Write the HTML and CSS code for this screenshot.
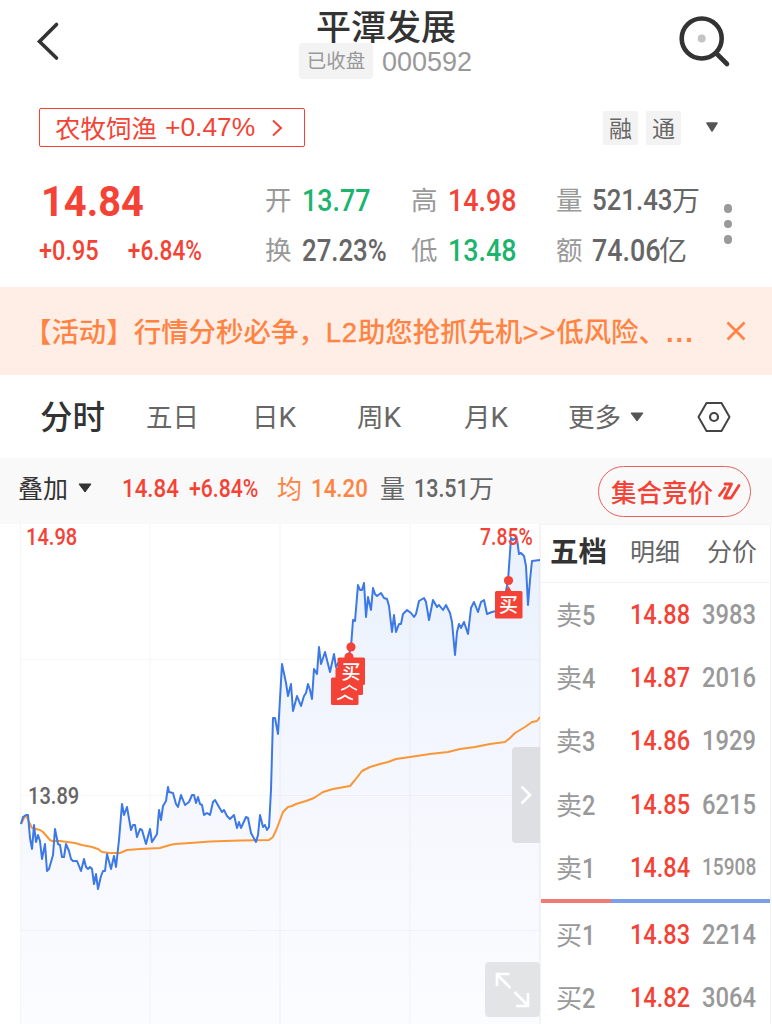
FILE: index.html
```html
<!DOCTYPE html>
<html lang="zh-CN">
<head>
<meta charset="utf-8">
<title>平潭发展 000592</title>
<link rel="stylesheet" href="styles.css">
</head>
<body>
<header class="header">
  <svg class="back" width="40" height="44" viewBox="30 20 40 44"><path d="M56.500 24.500L39.500 41.500L56.500 58" fill="none" stroke="#333" stroke-width="3.600" stroke-linecap="round"/></svg>
  <div class="heading">
    <h1>平潭发展</h1>
    <div class="sub"><span class="closed">已收盘</span><span class="code">000592</span></div>
  </div>
  <svg class="search" width="56" height="56" viewBox="676 14 56 56"><circle cx="701.700" cy="38.500" r="20" fill="none" stroke="#333" stroke-width="4.600"/><circle cx="701.700" cy="38.500" r="4" fill="#c4c4c4"/><path d="M716 53L727 64" stroke="#333" stroke-width="4.600" stroke-linecap="round"/></svg>
</header>

<section class="sector-row">
  <div class="sector"><span>农牧饲渔</span><span class="pct">+0.47%</span><svg width="12" height="20" viewBox="0 0 12 20"><path d="M2 2.500L10 10L2 17.500" fill="none" stroke="#f44336" stroke-width="2"/></svg></div>
  <span class="flag">融</span><span class="flag">通</span>
  <svg class="drop" width="14" height="11" viewBox="0 0 14 11"><path d="M2 1H12L7 9Z" fill="#555" stroke="#555" stroke-width="1.500" stroke-linejoin="round"/></svg>
</section>

<section class="quote">
  <div class="price">
    <div class="last"><b class="num">14.84</b></div>
    <div class="change"><b class="num">+0.95</b><b class="num pc">+6.84%</b></div>
  </div>
  <div class="stats">
    <span>开</span><b class="num green">13.77</b><span>高</span><b class="num red">14.98</b><span>量</span><div class="amount vol"><b class="num">521.43</b><i>万</i></div>
    <span>换</span><b class="num pc">27.23%</b><span>低</span><b class="num green">13.48</b><span>额</span><div class="amount"><b class="num">74.06</b><i>亿</i></div>
  </div>
  <div class="dots"><i></i><i></i><i></i></div>
</section>

<section class="banner">
  <p>【活动】行情分秒必争，<span class="latin">L2</span>助您抢抓先机<span class="arrows">&gt;&gt;</span>低风险、<span class="more">...</span></p>
  <svg width="20" height="20" viewBox="0 0 20 20"><path d="M1.500 1.500L18.500 18.500M18.500 1.500L1.500 18.500" stroke="#ff8444" stroke-width="2.700"/></svg>
</section>

<nav class="tabs">
  <span class="active">分时</span><span>五日</span><span>日<em>K</em></span><span>周<em>K</em></span><span>月<em>K</em></span><span>更多</span>
  <svg class="tri" width="16" height="12" viewBox="0 0 16 12"><path d="M2 2H14L8 10Z" fill="#555" stroke="#555" stroke-linejoin="round"/></svg>
  <svg class="hex" width="36" height="32" viewBox="0 0 36 32"><path d="M10.500 2H25.500L33.500 16L25.500 30H10.500L2.500 16Z" fill="none" stroke="#444" stroke-width="2" stroke-linejoin="round"/><circle cx="18" cy="16" r="4" fill="none" stroke="#444" stroke-width="2.200"/></svg>
</nav>

<section class="info">
  <span class="overlay">叠加</span>
  <svg class="tri" width="16" height="12" viewBox="0 0 16 12"><path d="M2 2H14L8 10Z" fill="#333" stroke="#333" stroke-linejoin="round"/></svg>
  <b class="num red">14.84</b><b class="num red pc">+6.84%</b>
  <span class="orange">均</span><b class="num orange">14.20</b>
  <span>量</span><b class="num now">13.51</b><span class="unit">万</span>
  <div class="auction"><span>集合竞价</span><svg width="24" height="20" viewBox="0 0 24 20"><path d="M8 7L2.500 14.500M8 3H14.500L7.500 17H14L22 4.500" fill="none" stroke="#f44336" stroke-width="2.800" stroke-linecap="round" stroke-linejoin="round"/></svg></div>
</section>

<main class="main">
  <div class="chart">
    <svg width="540" height="500" viewBox="0 524 540 500">
      <defs><linearGradient id="fill" gradientUnits="userSpaceOnUse" x1="0" y1="540" x2="0" y2="1024"><stop offset="0" stop-color="#e9f1fd"/><stop offset=".5" stop-color="#f5f7fe"/><stop offset="1" stop-color="#fbfcff"/></linearGradient></defs>
      <path id="area" fill="url(#fill)"/>
      <path d="M20.500 524V1024M150 524V1024M280 524V1024M410 524V1024M539.500 524V1024M20 659.500H540M20 795.500H540M20 930.500H540" stroke="#55606f" stroke-opacity=".055" stroke-width="1.200"/>
      <path d="M21 824L25 816L27 817L29 822L32 828L36 829L40 830L43 832L50 840L52 841L60 841L75 843L82 845L92 847L98 849L102 852L110 853L120 853L127 850L140 849L160 848L170 845L175 844L190 843L210 841.500L240 840.500L269 840L273 837L277 828L283 812L288 807L292 806L296 804L306 801L314 798L323 792L333 789L350 786L355 780L362 771L370 767L380 764L388 762L396 759L410 757L430 754L448 752L460 749L475 747L490 744L505 742L510 738L515 733L525 727L532 722L537 721L540 717" fill="none" stroke="#fa9635" stroke-width="2" stroke-linejoin="round"/>
      <polyline id="price" points="21,824 23,817 26,815 28,815 30,838 32,849 34,825 36,842 38,835 40,841 42,859 45,844 47,871 49,869 53,855 55,829 58,844 60,845 62,857 64,857 66,844 69,851 71,859 73,861 77,861 81,871 84,859 86,867 88,869 90,867 92,869 94,884 96,874 98,889 101,876 103,871 105,871 107,854 111,869 114,856 116,867 119,840 122,804 124,815 127,807 131,830 133,825 135,825 137,837 140,829 142,830 146,844 150,829 152,842 157,834 159,810 161,820 163,806 166,801 168,787 169,792 173,793 176,804 178,807 181,795 185,805 189,802 192,795 194,795 196,803 198,797 200,804 202,805 204,815 207,813 210,815 213,802 215,800 219,807 222,812 224,810 227,816 230,819 234,815 237,828 239,822 241,828 246,817 248,818 251,833 256,842 258,835 260,815 263,827 265,825 267,830 269,827 271,790 273,718 275,718 278,734 282,664 286,683 288,696 291,684 293,711 297,696 301,706 304,696 306,693 308,684 310,690 312,699 314,669 317,674 319,647 321,664 325,652 327,660 330,672 334,654 336,667 340,660 345,670 351,647 353,620 355,621 358,585 360,590 362,590 364,583 366,617 368,597 371,610 373,588 375,594 377,596 381,593 384,598 387,599 389,606 392,632 394,615 396,632 399,624 401,624 403,614 407,610 411,613 414,617 416,614 419,601 424,598 426,602 429,620 433,600 437,607 439,605 443,610 446,605 450,613 452,622 455,655 457,632 459,624 461,628 464,622 468,634 471,608 474,602 478,612 481,602 484,600 487,614 492,612 496,611 502,610 508,581 511,538 513,540 516,538 517,539 519,554 521,553 524,556 526,566 528,605 530,580 532,561 540,560" fill="none" stroke="#3c78e6" stroke-width="2" stroke-linejoin="round"/>
      <g fill="#f44336">
        <circle cx="351" cy="647" r="4.600"/><circle cx="349" cy="657" r="4.600"/>
        <rect x="331" y="677.500" width="27.500" height="27.500" rx="1.500"/>
        <rect x="335.500" y="667.500" width="27.500" height="27.500" rx="1.500"/>
        <rect x="337.500" y="657.500" width="27.500" height="27.500" rx="1.500"/>
        <circle cx="508.500" cy="580.500" r="4.600"/><path d="M505 592L508.500 586L512 592Z"/>
        <rect x="495" y="591" width="27.500" height="27.500" rx="1.500"/>
      </g>
      <path d="M341 690Q347 688 349.500 685.500Q352 688 357 690M337 699.500Q342 698 345 695.500Q348 698 353 699.500" fill="none" stroke="#fff" stroke-width="1.700"/>
      <text class="mark" x="341.500" y="678.500">买</text><text class="mark" x="499" y="612">买</text>
    </svg>
    <b class="num axis top">14.98</b><b class="num axis pct-top">7.85%</b><b class="num axis mid">13.89</b>
    <div class="handle"><svg width="14" height="22" viewBox="0 0 14 22"><path d="M2.500 2.500L11 11L2.500 19.500" fill="none" stroke="#fff" stroke-width="2.600"/></svg></div>
    <div class="expand"><svg width="55" height="55" viewBox="0 0 55 55"><path d="M25.500 26L12 12.500M12 24V12H24.500M29.500 30L43 43.500M43 31V44H31" fill="none" stroke="#fff" stroke-width="2.600"/></svg></div>
  </div>
  <aside class="book">
    <div class="book-tabs"><strong>五档</strong><span>明细</span><span>分价</span></div>
    <div class="sell">
      <div class="row"><span>卖<b class="num">5</b></span><b class="num red">14.88</b><b class="num qty">3983</b></div>
      <div class="row"><span>卖<b class="num">4</b></span><b class="num red">14.87</b><b class="num qty">2016</b></div>
      <div class="row"><span>卖<b class="num">3</b></span><b class="num red">14.86</b><b class="num qty">1929</b></div>
      <div class="row"><span>卖<b class="num">2</b></span><b class="num red">14.85</b><b class="num qty">6215</b></div>
      <div class="row"><span>卖<b class="num">1</b></span><b class="num red">14.84</b><b class="num qty long">15908</b></div>
    </div>
    <div class="ratio"></div>
    <div class="buy">
      <div class="row"><span>买<b class="num">1</b></span><b class="num red">14.83</b><b class="num qty">2214</b></div>
      <div class="row"><span>买<b class="num">2</b></span><b class="num red">14.82</b><b class="num qty">3064</b></div>
    </div>
  </aside>
</main>
<script src="chart.js"></script>
</body>
</html>
```
FILE: chart.js
```js
// Close the price line down to the bottom edge to form the shaded area.
const points = document.getElementById('price').getAttribute('points');
document.getElementById('area').setAttribute('d', 'M21 1024L' + points.split(' ').join('L') + 'L540 1024Z');
```
FILE: styles.css
```css
* { box-sizing: border-box; }
body { margin: 0; width: 772px; height: 1024px; overflow: hidden; background: #fff; color: #666; font-family: "Liberation Sans", "Noto Sans CJK SC", sans-serif; white-space: nowrap; }
svg { display: block; flex: none; }
i, em { font-style: normal; }
.num { display: inline-block; font-family: Roboto, sans-serif; font-weight: 500; transform: scaleX(.84); transform-origin: 0 50%; line-height: 1; }
.red { color: #f44336; }
.green { color: #1cb46e; }
.orange { color: #ff8444; }

.header { height: 96px; display: grid; grid-template-columns: 299px 377px 96px; }
.back { margin: 20px 0 0 30px; }
.heading h1 { margin: 7px 0 0 17px; font-size: 35px; font-weight: 500; line-height: 36px; height: 36px; color: #333; font-family: "Noto Sans CJK SC", sans-serif; }
.sub { display: flex; gap: 9px; }
.closed { width: 74px; height: 36px; border-radius: 4px; background: #f3f3f3; color: #999; font-size: 19.500px; line-height: 37px; text-align: center; }
.code { font-size: 27px; line-height: 38px; color: #999; }
.search { margin-top: 14px; }

.sector-row { height: 84px; padding: 12px 0 0 39px; display: flex; align-items: flex-start; }
.sector { width: 266px; height: 39px; border: 1.500px solid #f44336; border-radius: 2px; color: #f44336; font-size: 25.500px; display: flex; align-items: center; padding-left: 15px; margin-right: 298px; }
.sector > span:first-child { padding-bottom: 2px; }
.pct { margin: 0 16px 0 8px; font-size: 26.400px; }
.flag { width: 35px; height: 34px; margin: 3px 8px 0 0; background: #f3f3f3; border-radius: 2px; font-size: 23px; line-height: 36px; text-align: center; }
.drop { margin: 14px 0 0 16px; }

.quote { height: 107px; display: grid; grid-template-columns: 265px 454px 20px; }
.price { padding-left: 39px; color: #f44336; }
.last { height: 44px; padding-left: 2px; }
.last .num { font-size: 43px; font-weight: 700; transform: scaleX(.925); }
.change { display: flex; padding-top: 13px; }
.change .num { width: 88px; font-size: 28px; }
.change .pc { transform: scaleX(.81); padding-left: 1px; }
.stats { display: grid; grid-template-columns: 37px 109px 37px 108px 36px 1fr; grid-template-rows: 50px 52px; line-height: 40px; }
.stats > span { font-size: 26.500px; line-height: 37px; color: #999; font-family: "Noto Sans CJK SC", sans-serif; font-weight: 400; }
.stats .num { font-size: 32px; line-height: 40px; }
.stats .pc { transform: scaleX(.805); }
.amount { display: grid; grid-template-columns: 67px 30px; }
.amount.vol { grid-template-columns: 80px 30px; }
.vol .num { font-size: 30px; transform: scaleX(.86); }
.amount i { font-size: 28px; line-height: 43px; }
.dots { padding-top: 24px; display: grid; gap: 7px; align-content: start; padding-left: 4.500px; }
.dots i { width: 8.500px; height: 8.500px; border-radius: 50%; background: #999; }

.banner { height: 88px; background: #ffeee6; display: flex; align-items: center; color: #ff8444; }
.banner p { margin: 0; padding: 0 0 2px 24px; width: 726px; font-family: "Noto Sans CJK SC", sans-serif; font-size: 27.450px; font-weight: 500; letter-spacing: 0; }
.latin { font-family: "Liberation Sans", sans-serif; letter-spacing: .8px; -webkit-text-stroke: .4px; }
.arrows { font-family: "Liberation Sans", sans-serif; letter-spacing: .8px; font-weight: 400; -webkit-text-stroke: .3px; }
.more { font-family: "Liberation Sans", sans-serif; font-weight: 700; letter-spacing: 2px; }

.tabs { height: 83px; display: grid; grid-template-columns: 106px 106px 105px 107px 104px 61px 67px 36px; padding-left: 40px; align-items: center; font-size: 26.500px; }
.tabs span { font-family: "Noto Sans CJK SC", sans-serif; font-weight: 400; padding-bottom: 2px; }
.tabs em { font-family: Roboto, sans-serif; font-weight: 400; font-size: 28px; }
.tabs .active { font-size: 32.500px; font-weight: 500; color: #333; padding-bottom: 4px; }

.info { height: 66px; background: #f9f9f9; display: grid; grid-template-columns: 59px 45px 67px 88px 34px 69px 34px 55px 129px 153px; align-items: center; padding: 0 0 6px 18px; font-size: 25px; }
.info > span { padding-bottom: 2px; }
.info .num { font-size: 26.500px; }
.info .pc { transform: scaleX(.8); }
.info .now { transform: scaleX(.81); }
.overlay { color: #333; }
.auction { height: 51px; margin-top: 6px; border: 1.500px solid #e8605a; border-radius: 26px; display: flex; align-items: center; gap: 4px; padding-left: 12px; color: #f44336; font-family: "Noto Sans CJK SC", sans-serif; font-weight: 500; font-size: 25.500px; }
.auction span { padding-bottom: 2px; }

.main { height: 500px; display: grid; grid-template-columns: 540px 231px; }
.chart { position: relative; }
.mark { font: 500 19px "Noto Sans CJK SC", sans-serif; fill: #fff; }
.axis { position: absolute; font-size: 24.500px; color: #f44336; }
.top { left: 26px; top: 1px; transform: scaleX(.82); }
.pct-top { left: 480px; top: 1px; transform: scaleX(.79); }
.mid { left: 28px; top: 260px; color: #666; transform: scaleX(.82); }
.handle { position: absolute; left: 512px; top: 223px; width: 28px; height: 96px; border-radius: 4px 0 0 4px; background: #dedfe2; display: flex; align-items: center; padding-left: 7px; }
.expand { position: absolute; left: 485px; top: 438px; width: 55px; height: 55px; border-radius: 4px; background: #e3e4e6; }

.book { border: 1.500px solid #f3f3f3; border-bottom: 0; }
.book-tabs { height: 58px; border-bottom: 1px solid #f3f3f3; display: grid; grid-template-columns: 80px 77px 60px; padding: 0 0 8px 9px; align-items: center; font-size: 25px; }
.book-tabs strong { color: #333; font-size: 28.500px; font-weight: 700; }
.row { height: 63.200px; display: grid; grid-template-columns: 74px 72px 60px; align-items: center; padding: 1px 0 0 15px; font-size: 26px; color: #999; }
.row span { padding-bottom: 3px; }
.row .num { font-size: 28px; }
.row .qty { transform: scaleX(.85); }
.row .long { font-size: 23px; transform: scaleX(.83); }
.ratio { height: 4px; background: linear-gradient(to right, #ef7b74 70px, #7b9fe8 70px); }
.sell { height: 316px; }
```
